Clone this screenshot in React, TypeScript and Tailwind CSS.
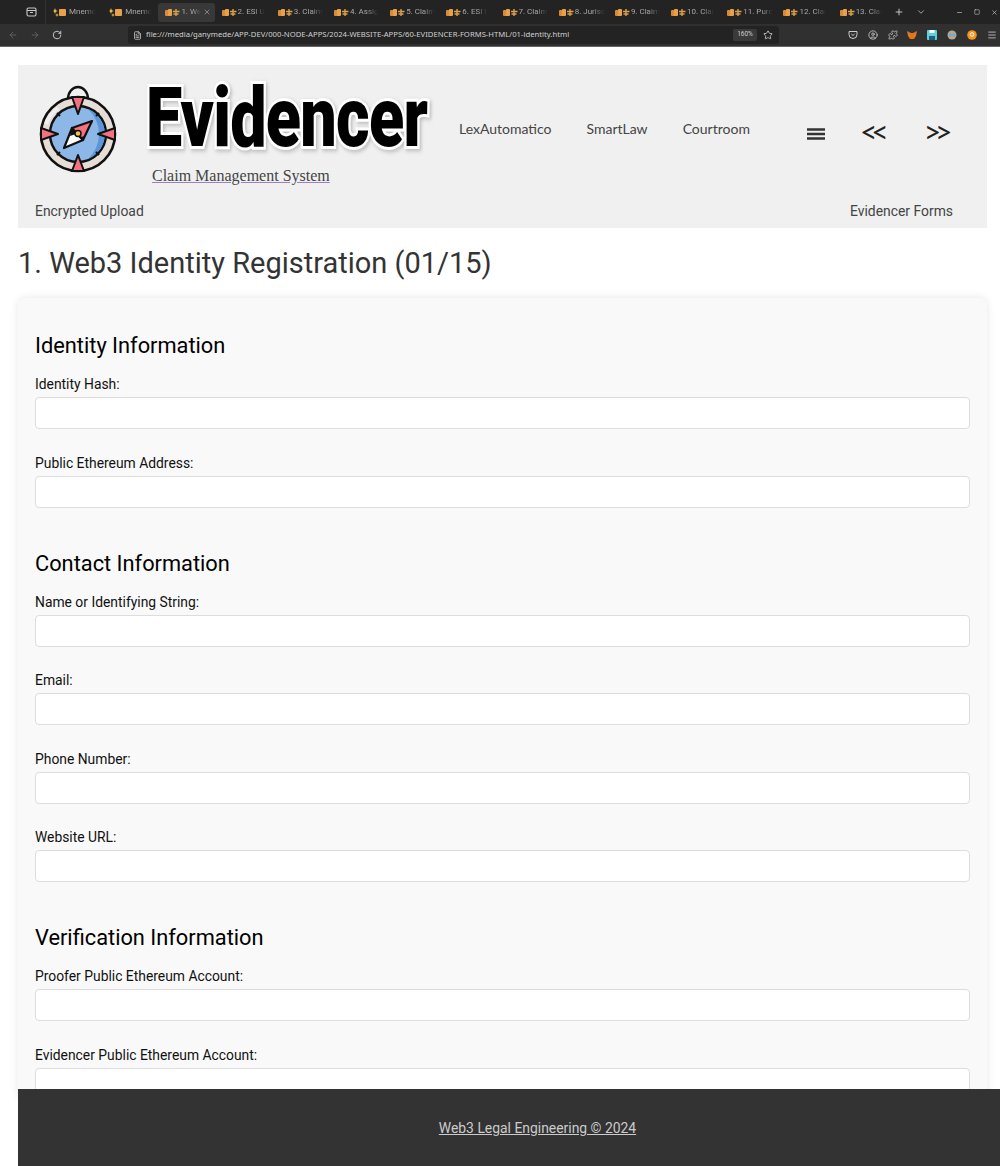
import React from 'react';
import { ArrowLeft, ArrowRight, RotateCw, FileText, Star, CircleUser, Puzzle, Plus, ChevronDown, Minus, X, Menu, Square } from 'lucide-react';

const tabs = ['Mnemo', 'Mnemo', '1. We', '2. ESI U', '3. Claim', '4. Assig', '5. Claim', '6. ESI t', '7. Claim', '8. Jurisd', '9. Claim', '10. Clai', '11. Purc', '12. Clai', '13. Clai'];

const sections = [
  { title: 'Identity Information', fields: ['Identity Hash:', 'Public Ethereum Address:'] },
  { title: 'Contact Information', fields: ['Name or Identifying String:', 'Email:', 'Phone Number:', 'Website URL:'] },
  { title: 'Verification Information', fields: ['Proofer Public Ethereum Account:', 'Evidencer Public Ethereum Account:'] },
];

const TabIcon = ({ spark }: { spark: boolean }) => (
  <svg width="15" height="9" viewBox="0 0 15 9" className="shrink-0">
    {spark ? (
      <path d="M2 0l.8 2.2L5 3l-2.2.8L2 6l-.8-2.2L0 3l1.2-.8zM4 5l.5 1.5L6 7l-1.5.5L4 9l-.5-1.5L2 7l1.500-.5z" fill="#f2c14e" />
    ) : (
      <rect x="0" y="2" width="6" height="6" rx="1" fill="#d98a3d" />
    )}
    <rect x={spark ? 6 : 3} y="1" width={spark ? 7 : 4} height="7" rx="1" fill="#e8a04a" />
    {!spark && <path d="M8 3.500h6.500M11 1v7M8.500 6h5" stroke="#d9a04e" strokeWidth="1.4" />}
  </svg>
);

const Compass = () => (
  <svg width="80" height="90" viewBox="0 0 80 90" className="shrink-0">
    <path d="M30 15a10 12 0 1 1 20 0" fill="#f0f0f0" stroke="#111" strokeWidth="2.400" />
    <circle cx="40" cy="50" r="37" fill="#e6ddd6" stroke="#111" strokeWidth="2.600" />
    <path d="M8 40a34 34 0 0 1 12-16" fill="none" stroke="#f0f0f0" strokeWidth="4" />
    <circle cx="40" cy="50" r="28" fill="#8db7e6" stroke="#111" strokeWidth="2.400" />
    <path d="M50 25a27 27 0 0 1 0 50a34 34 0 0 0 0-50z" fill="#5b97d8" />
    <path d="M40 30l-6-17h12zM40 71l-6 16h12zM20 50L3 44v12zM60 50l17-6v12z" fill="#f2727f" stroke="#111" strokeWidth="2" strokeLinejoin="round" />
    <path d="M19 29l3 3M61 29l-3 3M19 71l3-3M61 71l-3-3" stroke="#111" strokeWidth="2" />
    <path d="M26 64l8-20 11 12z" fill="#fff" stroke="#111" strokeWidth="2.200" strokeLinejoin="round" />
    <path d="M54 37l-20 7 11 12z" fill="#f2727f" stroke="#111" strokeWidth="2.200" strokeLinejoin="round" />
    <path d="M34 44l-2 8 6-2zM45 56l2-4-4 1z" fill="#111" />
    <circle cx="40" cy="49.500" r="3" fill="#f5c04e" stroke="#111" strokeWidth="1.500" />
  </svg>
);

const BrowserChrome = () => (
  <div className="h-[47px] bg-[#303030] border-b border-[#666] text-[#a8a8a8]">
    <div className="h-[24px] bg-[#232323] flex items-center">
      <div className="w-[46px] h-full flex items-center justify-end pr-[8px] border-r border-[#333]">
        <svg width="11" height="10" viewBox="0 0 11 10" fill="none" stroke="#c8c8c8" strokeWidth="1.100"><rect x="1" y="1" width="9" height="8" rx="1.500" /><path d="M1 3.500h9M4 5.500h3" /></svg>
      </div>
      {tabs.map((tab, i) => (
        <div key={i} className={`w-[56.2px] h-[19px] flex items-center gap-[1px] pl-[7px] rounded-[3px] text-[8px] overflow-hidden ${i === 2 ? 'bg-[#383838]' : ''}`}>
          <TabIcon spark={i < 2} />
          <span className="whitespace-nowrap [mask-image:linear-gradient(90deg,#000_60%,transparent)]">{tab}</span>
          {i === 2 && <X size={8} className="shrink-0 ml-[1px]" />}
        </div>
      ))}
      <Plus size={10} className="ml-[5px] text-[#ddd]" />
      <ChevronDown size={10} className="ml-[12px] text-[#bbb]" />
      <div className="ml-auto flex items-center gap-[11px] pr-[2px] text-[#ddd]">
        <Minus size={7} />
        <Square size={6} />
        <X size={7} />
      </div>
    </div>
    <div className="h-[22px] flex items-center">
      <div className="w-[128px] flex items-center pl-[8px] gap-[12px]">
        <ArrowLeft size={10} className="text-[#666]" />
        <ArrowRight size={10} className="text-[#666]" />
        <RotateCw size={10} className="text-[#ddd]" />
      </div>
      <div className="w-[651px] h-[18px] bg-[#232323] rounded-[3px] flex items-center pl-[5px] text-[7.7px] text-[#cfcfcf]">
        <FileText size={9} className="mr-[4px] shrink-0" />
        <span className="whitespace-nowrap font-['Noto_Sans',sans-serif]">file:///media/ganymede/APP-DEV/000-NODE-APPS/2024-WEBSITE-APPS/60-EVIDENCER-FORMS-HTML/01-identity.html</span>
        <span className="ml-auto w-[24px] h-[12px] bg-[#3a3a3a] rounded-[2px] text-[6.5px] flex items-center justify-center">160%</span>
        <Star size={10} className="mx-[6px]" />
      </div>
      <div className="flex-1 flex items-center pl-[69px] gap-[9.8px] text-[#c8c8c8]">
        <svg width="10" height="10" viewBox="0 0 10 10" fill="none" stroke="#ccc" strokeWidth="1" className="shrink-0"><path d="M1 1.500h8v3a4 4 0 0 1-8 0zM3.400 4L5 5.500 6.600 4" /></svg>
        <CircleUser size={10} className="shrink-0" />
        <Puzzle size={10} className="shrink-0" />
        <svg width="10" height="10" viewBox="0 0 10 10" className="shrink-0"><path d="M0 1l4 2h2l4-2-1 5-2 3H3L1 6z" fill="#e2761b" /></svg>
        <svg width="10" height="10" viewBox="0 0 10 10" className="shrink-0"><rect width="10" height="10" rx="1" fill="#5fd0d8" /><rect x="2.500" y="0" width="5" height="3" fill="#fff" /><rect x="2" y="6" width="6" height="4" fill="#1d5f80" /></svg>
        <svg width="10" height="10" viewBox="0 0 10 10" className="shrink-0"><circle cx="5" cy="5" r="4.500" fill="#b7a692" /><circle cx="3.200" cy="5" r="1.500" fill="#6fa8d8" /><circle cx="6.800" cy="5" r="1.500" fill="#6fa8d8" /></svg>
        <svg width="10" height="10" viewBox="0 0 10 10" className="shrink-0"><circle cx="5" cy="5" r="4.800" fill="#f7931a" /><circle cx="5" cy="4.500" r="1.800" fill="none" stroke="#fff" strokeWidth="1" /></svg>
        <Menu size={10} className="shrink-0" />
      </div>
    </div>
  </div>
);

export default function App() {
  return (
    <div className="relative h-[1166px] overflow-hidden bg-white font-['Roboto',sans-serif]">
      <BrowserChrome />
      <div className="pt-[18px] pl-[18px] pr-[13px]">
        {/* Header */}
        <header className="h-[163px] bg-[#f0f0f0] text-[#333]">
          <div className="h-[130px] flex">
            <div className="w-[128px] shrink-0 pl-[20px] pt-[19px]"><Compass /></div>
            <div className="w-[313px] shrink-0">
              <div className="h-[86px] mt-[10px] whitespace-nowrap origin-left scale-x-[0.77] text-[84px] leading-[86px] font-black text-black tracking-[-1px] [-webkit-text-stroke:6px_white] [paint-order:stroke_fill] [filter:drop-shadow(2px_2px_2px_#bbb)]">Evidencer</div>
              <div className="mt-[5px] ml-[6px] font-['Liberation_Serif',serif] text-[16px] leading-[20px] text-[#444] underline decoration-[#9b7fc0]">Claim Management System</div>
            </div>
            <nav className="flex items-start pt-[55px] gap-[35px] font-['Lato',sans-serif] text-[14px] leading-[18px] text-[#444]">
              <span>LexAutomatico</span>
              <span>SmartLaw</span>
              <span>Courtroom</span>
            </nav>
            <div className="flex items-start pt-[49px] text-[#222] font-['Lato',sans-serif]">
              <svg width="18" height="12" viewBox="0 0 18 12" className="ml-[57px] mt-[14px]"><path d="M0 1.500h18M0 6h18M0 10.500h18" stroke="#333" strokeWidth="2.400" /></svg>
              <span className="ml-[35px] text-[30px] leading-[34px] tracking-[-6px]">&lt;&lt;</span>
              <span className="ml-[41px] text-[30px] leading-[34px] tracking-[-6px]">&gt;&gt;</span>
            </div>
          </div>
          <div className="flex justify-between pl-[17px] pr-[34px] pt-[7px] text-[13.9px] leading-[18px] text-[#444]">
            <span>Encrypted Upload</span>
            <span>Evidencer Forms</span>
          </div>
        </header>

        <h1 className="mt-[17px] text-[29px] leading-[36px] font-[450] text-[#333]">1. Web3 Identity Registration (01/15)</h1>

        {/* Form */}
        <form className="mt-[17px] mb-[200px] bg-[#f9f9f9] rounded-[8px] shadow-[0_0_8px_rgba(0,0,0,0.1)] px-[17px] pt-[34px]">
          {sections.map((section) => (
            <section key={section.title} className="mb-[42px]">
              <h2 className="text-[21.8px] leading-[28px] font-[450] text-black">{section.title}</h2>
              <div className="mt-[14px] flex flex-col gap-[23.5px]">
                {section.fields.map((field) => (
                  <label key={field} className="block text-[13.86px] leading-[20px] text-[#111]">
                    {field}
                    <input type="text" className="mt-[3px] block w-full h-[32px] bg-white border border-[#ddd] rounded-[4px]" />
                  </label>
                ))}
              </div>
            </section>
          ))}
        </form>
      </div>

      <footer className="absolute left-[18px] right-[-57px] bottom-0 h-[77px] pt-[2px] bg-[#333] flex items-center justify-center text-[13.9px] text-[#ccc] underline">
        Web3 Legal Engineering © 2024
      </footer>
    </div>
  );
}
